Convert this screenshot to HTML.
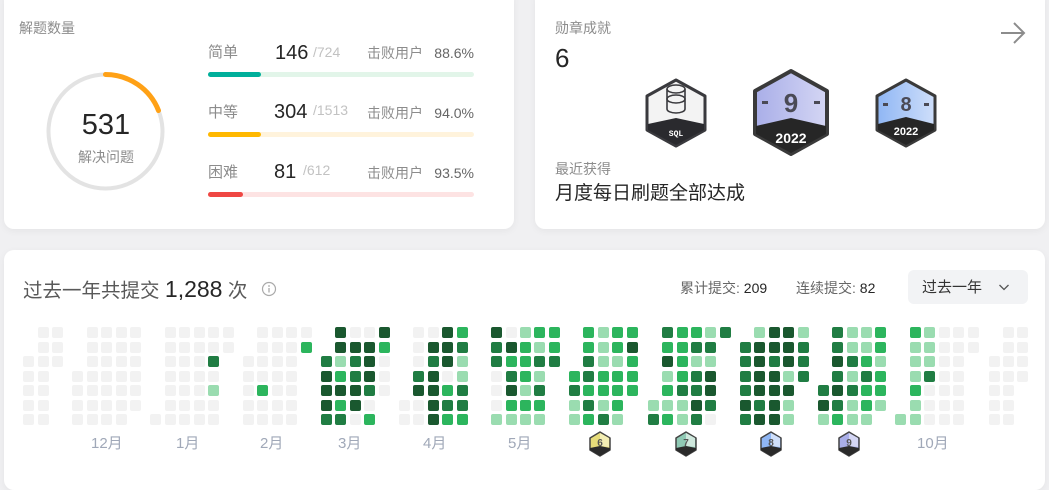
<!DOCTYPE html>
<html><head><meta charset="utf-8"><style>
*{margin:0;padding:0;box-sizing:border-box}
body{width:1049px;height:478px;background:#f0f0f2;position:relative;overflow:hidden;font-family:"Liberation Sans","Noto Sans CJK SC",sans-serif;color:#262626}
.card{position:absolute;background:#fff;border-radius:10px;box-shadow:0 2px 8px rgba(0,0,0,.05)}
.t{position:absolute;white-space:nowrap;line-height:1}
.g{color:#8c8c8c}
.bar{position:absolute;left:208px;width:266px;height:5px;border-radius:3px}
.bar i{position:absolute;left:0;top:0;height:5px;border-radius:3px}
.c{position:absolute;width:11px;height:11px;border-radius:2px}
</style></head><body>
<div class="card" style="left:4px;top:-10px;width:510px;height:239px"></div>
<div class="card" style="left:535px;top:-10px;width:510px;height:239px"></div>
<div class="card" style="left:4px;top:250px;width:1041px;height:240px"></div>

<div class="t g" style="left:19px;top:21px;font-size:14px">解题数量</div>
<svg style="position:absolute;left:0;top:0" width="220" height="230">
<circle cx="105.5" cy="131.5" r="57" fill="none" stroke="#e3e3e3" stroke-width="4"/>
<circle cx="105.5" cy="131.5" r="57" fill="none" stroke="#ffa116" stroke-width="5" stroke-linecap="round" stroke-dasharray="68 400" transform="rotate(-90 105.5 131.5)"/>
</svg>
<div class="t" style="left:56px;top:111px;width:100px;text-align:center;font-size:29px;color:#262626">531</div>
<div class="t g" style="left:56px;top:150px;width:100px;text-align:center;font-size:14px">解决问题</div>

<div class="t g" style="left:208px;top:45px;font-size:15px">简单</div>
<div class="t" style="left:275px;top:43px;font-size:20px">146</div>
<div class="t" style="left:313px;top:45px;font-size:14px;color:#c2c2c2">/724</div>
<div class="t g" style="left:367px;top:46px;font-size:14px">击败用户</div>
<div class="t" style="left:420px;top:46px;width:54px;text-align:right;font-size:14px;color:#666">88.6%</div>
<div class="bar" style="top:72px;background:#e2f5e9"><i style="width:53px;background:#00af9b"></i></div>

<div class="t g" style="left:208px;top:105px;font-size:15px">中等</div>
<div class="t" style="left:274px;top:102px;font-size:20px">304</div>
<div class="t" style="left:313px;top:103px;font-size:14px;color:#c2c2c2">/1513</div>
<div class="t g" style="left:367px;top:106px;font-size:14px">击败用户</div>
<div class="t" style="left:420px;top:106px;width:54px;text-align:right;font-size:14px;color:#666">94.0%</div>
<div class="bar" style="top:132px;background:#fff3dc"><i style="width:53px;background:#ffb800"></i></div>

<div class="t g" style="left:208px;top:165px;font-size:15px">困难</div>
<div class="t" style="left:274px;top:162px;font-size:20px">81</div>
<div class="t" style="left:303px;top:163px;font-size:14px;color:#c2c2c2">/612</div>
<div class="t g" style="left:367px;top:166px;font-size:14px">击败用户</div>
<div class="t" style="left:420px;top:166px;width:54px;text-align:right;font-size:14px;color:#666">93.5%</div>
<div class="bar" style="top:192px;background:#fde3e3"><i style="width:35px;background:#ef4743"></i></div>

<div class="t g" style="left:555px;top:21px;font-size:14px">勋章成就</div>
<div class="t" style="left:555px;top:45px;font-size:26px;color:#262626">6</div>
<svg style="position:absolute;left:999px;top:21px" width="28" height="24"><path d="M2 12H25M15 2L25 12L15 22" fill="none" stroke="#8c8c8c" stroke-width="2"/></svg>

<svg style="position:absolute;left:0;top:0" width="1049" height="230">
<defs>
<linearGradient id="g9" x1="0" x2="1"><stop offset="0" stop-color="#a9aee8"/><stop offset="1" stop-color="#d4d6f4"/></linearGradient>
<linearGradient id="g8" x1="0" x2="1"><stop offset="0" stop-color="#8fb6f4"/><stop offset="1" stop-color="#cfdffa"/></linearGradient>
</defs>
<path d="M676 80 L705 96 L705 130 L676 146 L647 130 L647 96Z" fill="#f3f3f3" stroke="#3a3a3e" stroke-width="3" stroke-linejoin="round"/>
<path d="M648 124 L676 118 L704 124 L704 130 L676 145 L648 130Z" fill="#2a2a2e"/>
<text x="676" y="136" font-size="8" fill="#fff" text-anchor="middle" font-family="Liberation Mono,monospace" font-weight="bold">SQL</text>
<g fill="none" stroke="#3a3a3e" stroke-width="1.6"><ellipse cx="676" cy="89" rx="9" ry="4"/><path d="M667 89V109M685 89V109"/><ellipse cx="676" cy="99" rx="9" ry="4"/><path d="M667 109A9 4 0 0 0 685 109"/></g>
<path d="M791 71 L827 91 L827 134 L791 154 L755 134 L755 91Z" fill="url(#g9)" stroke="#3a3a3a" stroke-width="4" stroke-linejoin="round"/>
<path d="M756 126 L791 118 L826 126 L826 134 L791 153 L756 134Z" fill="#262626"/>
<text x="791" y="143" font-size="14" fill="#fff" text-anchor="middle" font-weight="bold">2022</text>
<text x="791" y="112" font-size="26" fill="#4a4a55" text-anchor="middle" font-weight="bold">9</text>
<rect x="762" y="101" width="6" height="3" fill="#4a4a55"/><rect x="814" y="101" width="6" height="3" fill="#4a4a55"/>
<path d="M906 80 L935 96 L935 130 L906 146 L877 130 L877 96Z" fill="url(#g8)" stroke="#3a3a3a" stroke-width="3" stroke-linejoin="round"/>
<path d="M878 124 L906 117 L934 124 L934 130 L906 145 L878 130Z" fill="#262626"/>
<text x="906" y="135" font-size="11" fill="#fff" text-anchor="middle" font-weight="bold">2022</text>
<text x="906" y="111" font-size="20" fill="#4a4a55" text-anchor="middle" font-weight="bold">8</text>
<rect x="883" y="103" width="5" height="3" fill="#4a4a55"/><rect x="924" y="103" width="5" height="3" fill="#4a4a55"/>
</svg>

<div class="t g" style="left:555px;top:162px;font-size:14px">最近获得</div>
<div class="t" style="left:555px;top:184px;font-size:19px;color:#262626">月度每日刷题全部达成</div>

<div class="t" style="left:23px;top:278px;font-size:19.5px;color:#595959">过去一年共提交 <span style="font-size:23px;color:#262626">1,288</span> 次</div>
<svg style="position:absolute;left:261px;top:281px" width="16" height="16"><circle cx="8" cy="8" r="6.5" fill="none" stroke="#aaa" stroke-width="1.2"/><path d="M8 7V11.5" stroke="#aaa" stroke-width="1.3"/><circle cx="8" cy="5" r=".9" fill="#aaa"/></svg>
<div class="t" style="left:680px;top:281px;font-size:14px;color:#666">累计提交: <span style="color:#262626">209</span></div>
<div class="t" style="left:796px;top:281px;font-size:14px;color:#666">连续提交: <span style="color:#262626">82</span></div>
<div style="position:absolute;left:908px;top:270px;width:120px;height:34px;background:#f2f3f5;border-radius:6px"></div>
<div class="t" style="left:922px;top:280px;font-size:15px;color:#333">过去一年</div>
<svg style="position:absolute;left:998px;top:282px" width="12" height="10"><path d="M1.5 3L6 7.5L10.5 3" fill="none" stroke="#555" stroke-width="1.3"/></svg>

<div id="grid"></div>
<div class="t" style="left:91px;top:436px;font-size:15px;color:#a0a8b8">12月</div>
<div class="t" style="left:176px;top:436px;font-size:15px;color:#a0a8b8">1月</div>
<div class="t" style="left:260px;top:436px;font-size:15px;color:#a0a8b8">2月</div>
<div class="t" style="left:338px;top:436px;font-size:15px;color:#a0a8b8">3月</div>
<div class="t" style="left:423px;top:436px;font-size:15px;color:#a0a8b8">4月</div>
<div class="t" style="left:508px;top:436px;font-size:15px;color:#a0a8b8">5月</div>
<div class="t" style="left:917px;top:436px;font-size:15px;color:#a0a8b8">10月</div>
<svg style="position:absolute;left:0;top:428px" width="1049" height="32">
<g id="sb"></g>
</svg>
<script>
var C=['#f2f2f2','#9adcb0','#2cb55d','#207d43','#1a582f'];
var G=[
[[23,38,52],[[null,0,0],[null,0,0],[0,0,0],[0,0,null],[0,0,null],[0,0,null],[0,0,null]]],
[[72,87,101,116,130],[[null,0,0,0,0],[null,0,0,0,0],[null,0,0,0,0],[0,0,0,0,0],[0,0,0,0,0],[0,0,0,0,0],[0,0,0,0,null]]],
[[150,165,179,194,208,223],[[null,0,0,0,0,0],[null,0,0,0,0,0],[null,0,0,0,3,null],[null,0,0,0,0,null],[null,0,0,0,1,null],[null,0,0,0,0,null],[0,0,0,0,0,null]]],
[[243,257,272,286,301],[[null,0,0,0,0],[null,0,0,0,2],[0,0,0,0,null],[0,0,0,0,null],[0,2,0,0,null],[0,0,0,0,null],[0,0,0,0,null]]],
[[321,335,350,364,379],[[null,4,0,0,4],[null,4,4,4,2],[3,1,3,4,0],[4,2,3,4,0],[4,4,4,3,0],[4,2,4,0,null],[3,3,0,2,null]]],
[[399,413,428,442,457],[[null,0,0,4,2],[null,0,4,4,3],[null,0,3,4,1],[null,3,4,0,1],[null,4,4,2,3],[0,0,4,3,3],[0,0,4,2,2]]],
[[491,506,520,534,549],[[4,0,1,2,2],[3,4,2,1,2],[3,2,2,3,3],[0,3,2,1,null],[0,4,1,3,null],[0,2,2,2,null],[1,1,1,1,null]]],
[[569,583,598,612,627],[[null,2,1,2,2],[null,2,1,2,4],[null,3,1,1,2],[2,3,2,2,2],[3,2,2,2,2],[1,3,1,2,null],[1,2,3,1,null]]],
[[648,662,677,691,705,720],[[null,3,2,2,1,3],[null,2,2,3,3,null],[null,4,2,1,1,null],[null,1,2,3,4,null],[null,2,3,3,4,null],[1,1,1,4,3,null],[3,2,1,3,0,null]]],
[[740,754,769,783,798],[[null,1,4,4,1],[3,4,4,4,3],[3,4,3,4,3],[3,4,4,1,3],[3,4,4,4,null],[4,3,4,1,null],[3,4,4,1,null]]],
[[818,832,847,861,875],[[null,3,1,1,2],[null,3,1,1,2],[null,4,3,2,1],[null,3,1,3,2],[3,4,3,2,2],[4,3,1,2,1],[1,2,1,1,null]]],
[[895,910,924,939,953,968],[[null,2,1,0,0,0],[null,1,1,0,0,0],[null,1,1,0,0,null],[null,1,3,0,0,null],[null,2,0,0,0,null],[null,1,0,0,0,null],[1,1,0,0,0,null]]],
[[989,1003,1017],[[null,0,0],[null,0,0],[0,0,0],[0,0,0],[0,0,null],[0,0,null],[0,0,null]]]
];
var h='';
G.forEach(function(g){g[1].forEach(function(r,ri){r.forEach(function(v,ci){if(v===null)return;
h+='<div class="c" style="left:'+g[0][ci]+'px;top:'+(327+ri*14.5)+'px;background:'+C[v]+'"></div>';});});});
document.getElementById('grid').innerHTML=h;
var B=[[600,'#e6dc7a','#f3eeb4','6'],[686,'#8fc9b4','#cfe8dd','7'],[771,'#8fb6f4','#cfdffa','8'],[849,'#a9aee8','#d4d6f4','9']];
var s='';
B.forEach(function(b){var x=b[0],y=16;
s+='<path d="M'+x+' '+(y-12)+'L'+(x+10)+' '+(y-6)+'L'+(x+10)+' '+(y+6)+'L'+x+' '+(y+12)+'L'+(x-10)+' '+(y+6)+'L'+(x-10)+' '+(y-6)+'Z" fill="'+b[1]+'" stroke="#444" stroke-width="1.5" stroke-linejoin="round"/>';
s+='<path d="M'+x+' '+(y-11)+'L'+(x+9)+' '+(y-6)+'L'+(x+9)+' '+(y+3)+'L'+x+' '+(y+2)+'Z" fill="'+b[2]+'"/>';
s+='<path d="M'+(x-10)+' '+(y+4)+'L'+x+' '+(y+2)+'L'+(x+10)+' '+(y+4)+'L'+(x+10)+' '+(y+6)+'L'+x+' '+(y+12)+'L'+(x-10)+' '+(y+6)+'Z" fill="#2a2a2a"/>';
s+='<text x="'+x+'" y="'+(y+2)+'" font-size="10" text-anchor="middle" fill="#555" font-weight="bold">'+b[3]+'</text>';});
document.getElementById('sb').innerHTML=s;
</script>
</body></html>
